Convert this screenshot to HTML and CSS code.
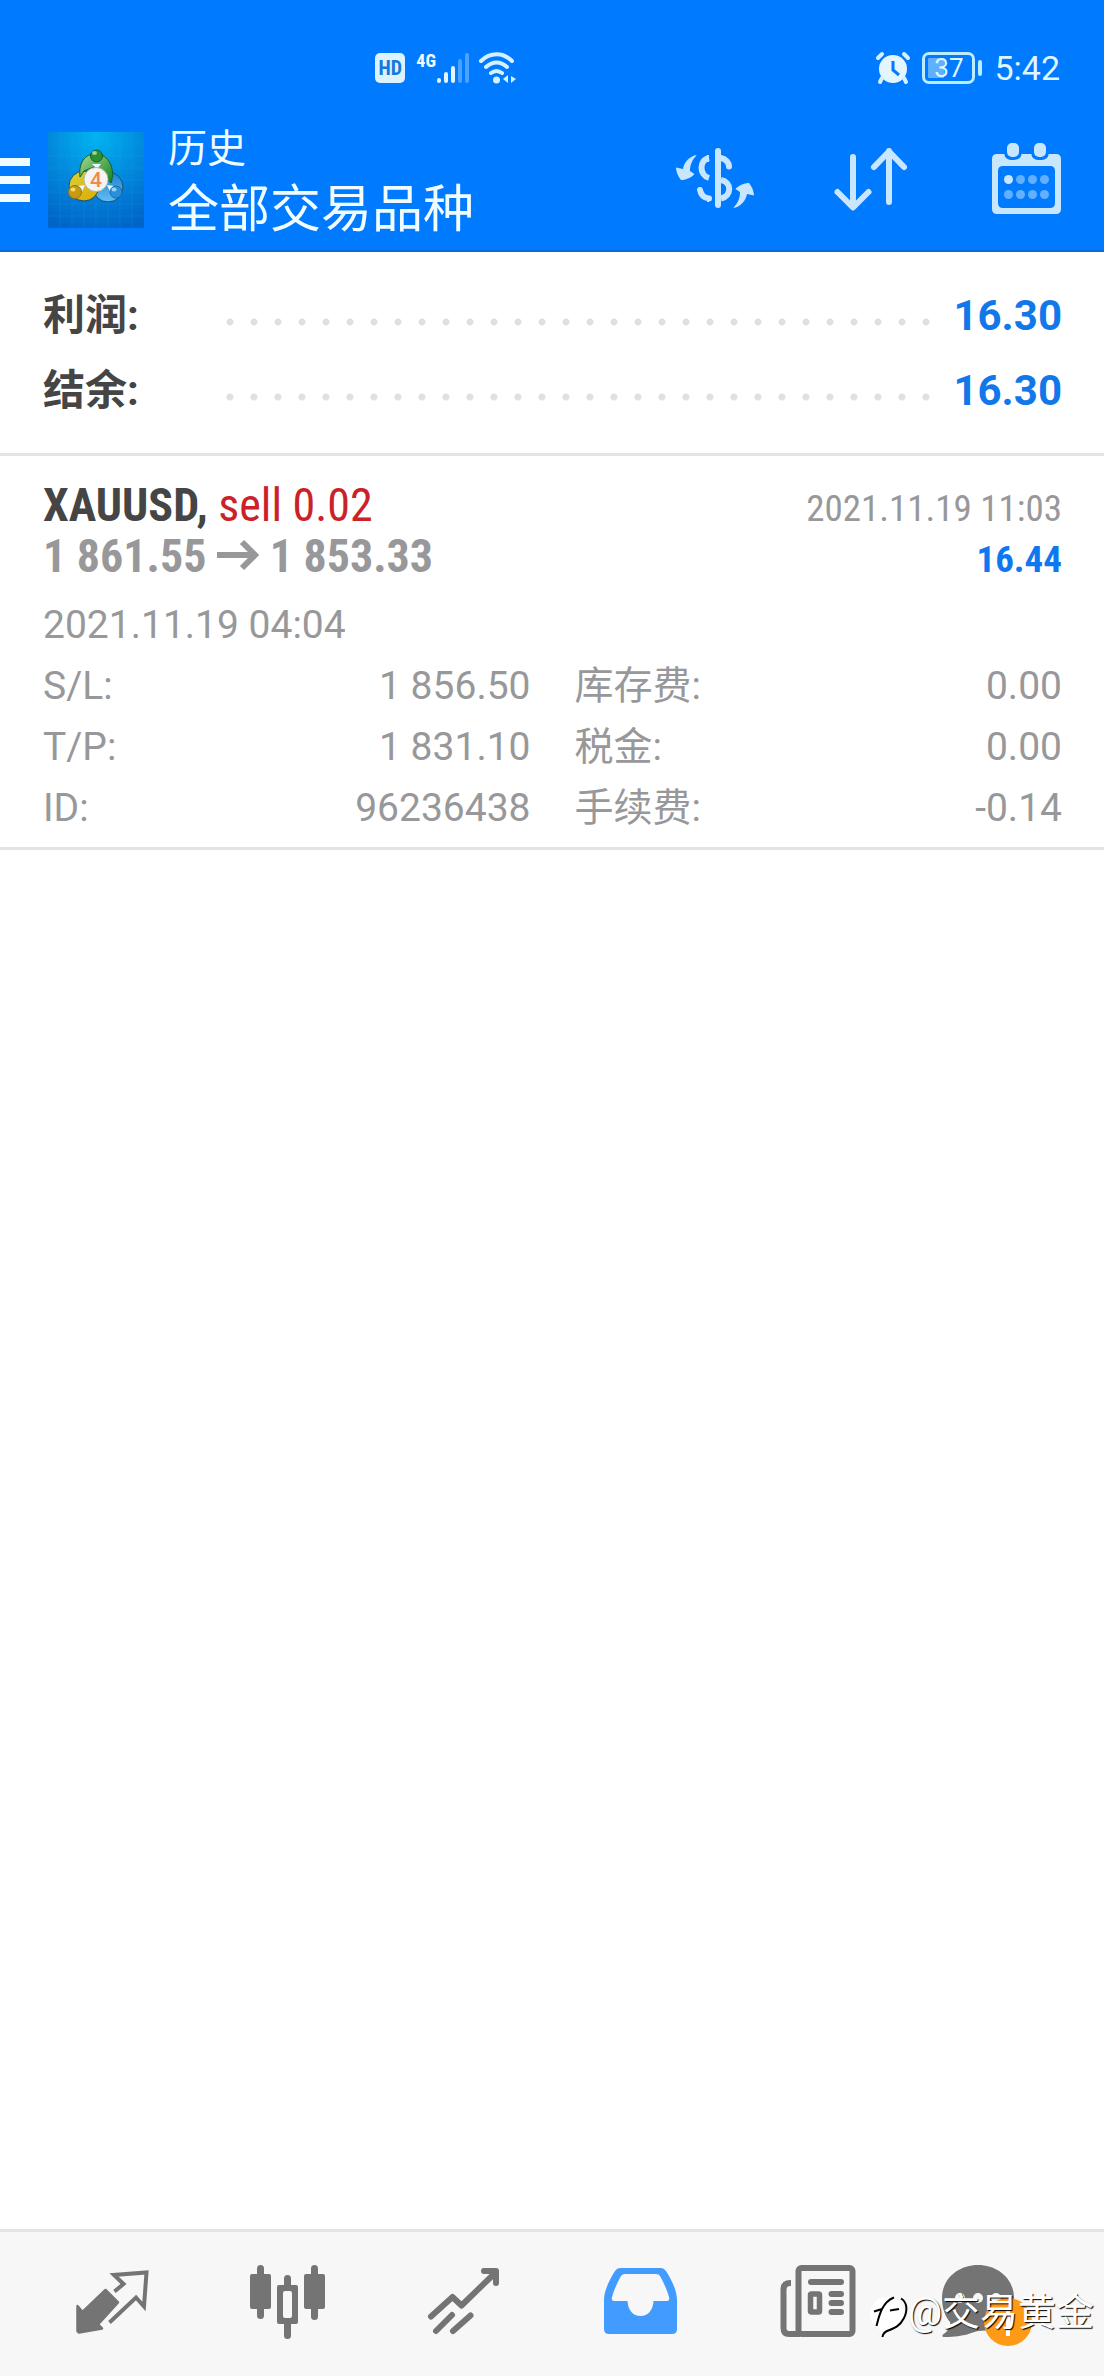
FILE: index.html
```html
<!DOCTYPE html>
<html lang="zh-CN">
<head>
<meta charset="utf-8">
<meta name="viewport" content="width=device-width, initial-scale=1">
<title>历史</title>
<link rel="stylesheet" href="styles.css">
</head>
<body>
<header class="header">
  <div class="status">
    <div class="status-group status-network">
      <span class="hd">HD</span>
      <span class="net">4G</span>
      <svg class="signal" width="34" height="32" viewBox="0 0 34 32" aria-hidden="true">
        <g stroke-width="4" stroke-linecap="round">
          <path d="M3 28v1M10 22v7M17 16v13" stroke="#e3f5ff"/>
          <path d="M24 9v20M31 3v26" stroke="#4ba3ff"/>
        </g>
      </svg>
      <svg class="wifi" width="40" height="32" viewBox="0 0 40 32" aria-hidden="true">
        <g fill="none" stroke="#d5f1ff" stroke-width="4" stroke-linecap="round">
          <path d="M3 9C12 0 25 0 34 9M8 15C15 9 22 9 29 15M13 21C17 18 20 18 24 21"/>
        </g>
        <circle cx="18.500" cy="28" r="3.500" fill="#d5f1ff"/>
        <path d="M30 23v8l-5-4zM32 23v8M33 31v-7l5 3z" fill="#d5f1ff"/>
      </svg>
    </div>
    <div class="status-group">
      <svg width="34" height="32" viewBox="0 0 34 32" aria-hidden="true">
        <circle cx="17" cy="17" r="14" fill="#e3f5ff"/>
        <path d="M2 6l4-4M32 6l-4-4M6 26l-2 4M28 26l2 4" stroke="#d5f1ff" stroke-width="4" stroke-linecap="round"/>
        <path d="M17 9v9l6 5" fill="none" stroke="#007aff" stroke-width="3"/>
      </svg>
      <span class="battery"><span class="battery-body">37</span><span class="battery-tip"></span></span>
      <time class="clock">5:42</time>
    </div>
  </div>
  <div class="appbar">
    <button class="menu" type="button" aria-label="菜单"><span></span><span></span><span></span></button>
    <svg class="logo" width="96" height="96" viewBox="0 0 96 96" aria-hidden="true">
      <defs>
        <radialGradient id="bg" cx=".5" cy=".05" r="1"><stop offset="0" stop-color="#00b4f0"/><stop offset=".5" stop-color="#0288dc"/><stop offset="1" stop-color="#0064c8"/></radialGradient>
        <linearGradient id="gr" x2="1" y2="1"><stop offset="0" stop-color="#a4dc92"/><stop offset="1" stop-color="#16801e"/></linearGradient>
        <linearGradient id="ye" x2="1" y2="1"><stop offset="0" stop-color="#d8d23a"/><stop offset="1" stop-color="#dba900"/></linearGradient>
        <linearGradient id="bl" x2="0" y2="1"><stop offset="0" stop-color="#1583d0"/><stop offset="1" stop-color="#66bdf2"/></linearGradient>
      </defs>
      <path d="M0 0h96v96H0z" fill="url(#bg)"/>
      <path d="M12 0v96M24 0v96M36 0v96M48 0v96M60 0v96M72 0v96M84 0v96M0 12h96M0 24h96M0 36h96M0 48h96M0 60h96M0 72h96M0 84h96" stroke="#5bd0ff" stroke-opacity=".1"/>
      <g stroke="#16507a" stroke-width="1">
        <circle cx="60" cy="55" r="15" fill="url(#bl)"/>
        <circle cx="36" cy="54" r="15" fill="url(#ye)"/>
        <path d="M32 45C30 28 40 21 48 22C60 22 68 36 63 51L58 45L48 34L36 39z" fill="url(#gr)" stroke="#14602a"/>
      </g>
      <path d="M44 32h9l-4 5zM30 54l7-1-4 9zM66 54l-7-1 4 9z" fill="#eef8ff"/>
      <circle cx="48.500" cy="24" r="6" fill="#2f8f35" stroke="#17602a"/>
      <circle cx="27" cy="60" r="6.500" fill="#c99a10" stroke="#8c7420"/>
      <circle cx="68" cy="60" r="6" fill="#2a90da" stroke="#1768a8"/>
      <ellipse cx="46.500" cy="21" rx="2.500" ry="2" fill="#9bd58f"/>
      <ellipse cx="25" cy="57.500" rx="2.500" ry="2" fill="#f3dc6c"/>
      <ellipse cx="66" cy="57.500" rx="2.500" ry="2" fill="#95d3fa"/>
      <circle cx="48" cy="47.500" r="12" fill="#f6f4f2" stroke="#b9b5a5"/>
      <text class="logo-number" x="48" y="55" text-anchor="middle">4</text>
    </svg>
    <div class="titles">
      <h1 class="screen-name">历史</h1>
      <p class="symbol-name">全部交易品种</p>
    </div>
    <div class="actions">
      <button class="icon-button" type="button" aria-label="货币">
        <svg width="84" height="84" viewBox="0 0 84 84">
          <g fill="none" stroke="#c9e6ff" stroke-width="6">
            <path d="M45 13v54" stroke-linecap="round"/>
            <path d="M36 20C26 22 26 37 36 40M48 42C59 44 59 58 48 60.500"/>
            <path d="M48 20C53 21 56 25 56 28.500M27 52C28 57 31 60 36 60.500" stroke-linecap="round"/>
            <path d="M34 17h2v7h-2zM34 58h2v6h-2z" fill="#c9e6ff" stroke="none"/>
          </g>
          <path id="turn" d="M23.700 17C17 18 11 24 10 31L3 29.500C3 34 6 40 8 42C12 42 18 40 21.500 36L17 33C17 27 19 22 23.700 17z" fill="#c9e6ff"/>
          <use href="#turn" transform="rotate(180 42 43.500)"/>
        </svg>
      </button>
      <button class="icon-button" type="button" aria-label="排序">
        <svg width="84" height="84" viewBox="0 0 84 84" fill="none" stroke="#c9e6ff" stroke-width="6" stroke-linecap="round" stroke-linejoin="round">
          <path d="M24 19v50M8.500 54L24 69.500L39.500 54M60 64V13M45 29L60 13.500L75 29"/>
        </svg>
      </button>
      <button class="icon-button" type="button" aria-label="日期">
        <svg width="84" height="84" viewBox="0 0 84 84" fill="#c9e6ff">
          <path fill-rule="evenodd" d="M12 16H19.500C19.500 20 23 22 28 22C33 22 36.500 20 36.500 16H46.500C46.500 20 50 22 55 22C60 22 63.500 20 63.500 16H71Q76 16 76 21V71Q76 76 71 76H12Q7 76 7 71V21Q7 16 12 16zM18 28Q13 28 13 33V65Q13 70 18 70H65Q70 70 70 65V33Q70 28 65 28z"/>
          <rect x="22" y="5" width="12" height="14" rx="5"/><rect x="49" y="5" width="12" height="14" rx="5"/>
          <circle cx="23.500" cy="41.500" r="4.500"/>
          <g fill="#62b0ff"><circle cx="35.500" cy="41.500" r="4.500"/><circle cx="47.500" cy="41.500" r="4.500"/><circle cx="59.500" cy="41.500" r="4.500"/><circle cx="23.500" cy="56.500" r="4.500"/><circle cx="35.500" cy="56.500" r="4.500"/><circle cx="47.500" cy="56.500" r="4.500"/><circle cx="59.500" cy="56.500" r="4.500"/></g>
        </svg>
      </button>
    </div>
  </div>
</header>

<main class="content">
  <dl class="summary">
    <div class="summary-row"><dt>利润:</dt><dd>16.30</dd></div>
    <div class="summary-row"><dt>结余:</dt><dd>16.30</dd></div>
  </dl>
  <article class="trade">
    <div class="trade-line">
      <h2 class="trade-symbol">XAUUSD, <span class="sell">sell 0.02</span></h2>
      <time class="trade-close">2021.11.19 11:03</time>
    </div>
    <div class="trade-line">
      <p class="trade-prices">1 861.55 <svg class="arrow" width="42" height="34" viewBox="0 0 42 34" role="img" aria-label="至"><path d="M0 17h38M25 4l13 13l-13 13" fill="none" stroke="#98989a" stroke-width="6"/></svg> 1 853.33</p>
      <strong class="trade-profit">16.44</strong>
    </div>
    <div class="details">
      <time class="trade-open">2021.11.19 04:04</time>
      <dl class="fields">
        <div class="field"><dt>S/L:</dt><dd>1 856.50</dd></div>
        <div class="field"><dt>库存费:</dt><dd>0.00</dd></div>
        <div class="field"><dt>T/P:</dt><dd>1 831.10</dd></div>
        <div class="field"><dt>税金:</dt><dd>0.00</dd></div>
        <div class="field"><dt>ID:</dt><dd>96236438</dd></div>
        <div class="field"><dt>手续费:</dt><dd>-0.14</dd></div>
      </dl>
    </div>
  </article>
</main>

<nav class="tabs">
  <a class="tab" href="#quotes" aria-label="行情">
    <svg width="84" height="84" viewBox="0 0 84 84">
      <path d="M35.500 28L48 40.500L28 62.500L32 66.500L9 70.500L7.500 69V44L12.500 50z" fill="#747474" stroke="#747474" stroke-width="2.500" stroke-linejoin="round"/>
      <path d="M44.500 29.500L53.500 22L44 13L76.500 10.500L74 44.500L66 35.500L39.500 60.500" fill="none" stroke="#747474" stroke-width="4"/>
    </svg>
  </a>
  <a class="tab" href="#chart" aria-label="图表">
    <svg width="84" height="84" viewBox="0 0 84 84" fill="#747474">
      <rect x="4" y="12" width="21" height="35" rx="2"/><rect x="11" y="3" width="7" height="54" rx="3.500"/>
      <path fill-rule="evenodd" d="M33 23H50Q52 23 52 25V60Q52 62 50 62H33Q31 62 31 60V25Q31 23 33 23zM39 29Q37 29 37 31V54Q37 56 39 56H44Q46 56 46 54V31Q46 29 44 29z"/>
      <path d="M38 24V16.500a3.500 3.500 0 0 1 7 0V24zM38 61V73.500a3.500 3.500 0 0 0 7 0V61z"/>
      <rect x="58" y="12" width="21" height="35" rx="2"/><rect x="65" y="3" width="7" height="55" rx="3.500"/>
    </svg>
  </a>
  <a class="tab" href="#trade" aria-label="交易">
    <svg width="84" height="84" viewBox="0 0 84 84" fill="none" stroke="#747474" stroke-width="6" stroke-linecap="round" stroke-linejoin="round">
      <path d="M9 54.500L30.500 35L39.500 43.500L73 11M62 9H74V21"/>
      <path d="M14 69L30 53M31 69L48.500 53.500"/>
    </svg>
  </a>
  <a class="tab" href="#history" aria-label="历史" aria-current="page">
    <svg width="84" height="84" viewBox="0 0 84 84">
      <path fill="#429cff" fill-rule="evenodd" d="M22 6H63Q66 6 68 9C73 17 79 28 79 38V67Q79 72 74 72H11Q6 72 6 67V38C6 28 12 17 17 9Q19 6 22 6zM27 12Q24 12 23 14C19 21 16 28 14 35Q13 39 16 39H29.500C30 48 35 54 42.500 54C50 54 55 48 55.500 39H69Q72 39 71 35C69 28 66 21 62 14Q61 12 58 12z"/>
    </svg>
  </a>
  <a class="tab" href="#news" aria-label="新闻">
    <svg width="84" height="84" viewBox="0 0 84 84" fill="none" stroke="#747474" stroke-width="6">
      <rect x="24.500" y="6" width="54" height="66" rx="3"/>
      <path d="M17 21H16Q9.500 21 9.500 28V66Q9.500 72 15 72H26"/>
      <path d="M37 20H67M57.500 32H67M57.500 41H67M57.500 50H67" stroke-linecap="round"/>
      <rect x="36.500" y="32" width="9" height="18" rx="1" stroke-width="5.500"/>
    </svg>
  </a>
  <a class="tab" href="#messages" aria-label="消息">
    <svg class="messages" width="84" height="84" viewBox="0 0 84 84">
      <path d="M28 3C48 3 64 17 64 36C64 56 50 69 28 69C23 70 15 75-5 75C-9 75-8 73-5 71C-1 68 1 64 0 60C-5 54-8 46-8 36C-8 17 8 3 28 3z" fill="#747474"/>
      <g fill="#f7f7f7"><circle cx="10" cy="36" r="5"/><circle cx="28" cy="36" r="5"/><circle cx="46" cy="36" r="5"/></g>
      <circle cx="58" cy="60" r="24" fill="#ff9a17"/>
      <path d="M58 46v28" stroke="#fff" stroke-width="4"/>
    </svg>
  </a>
  <div class="watermark">
    <svg width="38" height="44" viewBox="0 0 38 44" aria-hidden="true">
      <circle cx="17" cy="24" r="17" fill="#fff"/>
      <path d="M4 21.500L12 19M6.500 36C9 26 12 12 24 7.500M20 20.500L29 19M31 8.500C37 12 38 20 34 28C30 36 25 38 17 41Q13 43 12.500 47" fill="none" stroke="#000" stroke-width="2"/>
    </svg>
    <span>@交易黄金</span>
  </div>
</nav>
</body>
</html>
```

FILE: styles.css
```css
* {
  box-sizing: border-box;
}

body {
  display: flex;
  flex-direction: column;
  min-height: 100vh;
  margin: 0;
  background: #fff;
  color: #98989a;
  font-family: Roboto, "Noto Sans CJK SC", sans-serif;
  font-size: 39px;
}

h1, h2, p, dl, dd {
  margin: 0;
  font-weight: 400;
}

svg {
  display: block;
  overflow: visible;
}

button {
  padding: 0;
  border: 0;
  background: none;
}

.header {
  background: #007aff;
  border-bottom: 2px solid #0b6bd6;
  color: #f0fcff;
}

/* Status bar */

.status {
  display: flex;
  justify-content: space-between;
  align-items: center;
  height: 112px;
  padding: 24px 44px 0 34%;
}

.status-group {
  display: flex;
  align-items: center;
  gap: 12px;
}

.status-network {
  gap: 0;
}

.hd {
  width: 30px;
  border-radius: 5px;
  background: #dcf2ff;
  color: #1479dc;
  font-family: "Roboto Condensed", Roboto, sans-serif;
  font-size: 20px;
  font-weight: 700;
  line-height: 30px;
  text-align: center;
}

.net {
  align-self: flex-start;
  margin-left: 11px;
  font-family: "Roboto Condensed", Roboto, sans-serif;
  font-size: 18px;
  font-weight: 700;
  line-height: 18px;
}

.wifi {
  margin-left: 8px;
}

.battery {
  display: flex;
  align-items: center;
  gap: 3px;
}

.battery-body {
  width: 53px;
  padding: 3px;
  border: 3px solid #b9edff;
  border-radius: 7px;
  background: linear-gradient(90deg, #5fb0ff 40%, transparent 40%) content-box;
  color: #dff6ff;
  font-size: 26px;
  line-height: 20px;
  text-align: center;
}

.battery-tip {
  width: 4px;
  height: 16px;
  border-radius: 2px;
  background: #b9edff;
}

.clock {
  color: #dff6ff;
  font-size: 34px;
  line-height: 32px;
}

/* App bar */

.appbar {
  display: flex;
  align-items: center;
  height: 138px;
  padding: 0 35px 2px 0;
}

.menu {
  display: grid;
  gap: 10px;
  width: 30px;
}

.menu span {
  height: 8px;
  background: #f0fcff;
}

.logo {
  margin-left: 18px;
}

.logo-number {
  fill: #f08a4b;
  font-size: 21px;
  font-weight: 500;
}

.titles {
  flex: 1;
  margin-left: 24px;
  padding-top: 4px;
}

.screen-name {
  font-size: 39px;
  line-height: 56px;
}

.symbol-name {
  font-size: 51px;
  line-height: 66px;
}

.actions {
  display: flex;
  gap: 72px;
}

/* Summary */

.content {
  flex: 1;
}

.summary {
  padding: 26px 42px 25px 43px;
  border-bottom: 3px solid #e4e4e4;
}

.summary-row {
  display: flex;
  align-items: center;
  font-size: 42px;
  font-weight: 700;
  line-height: 75px;
}

.summary-row dt {
  width: 175px;
  height: 75px;
  color: #454545;
}

.summary-row dd {
  display: flex;
  flex: 1;
  align-items: center;
  color: #1278ea;
  font-weight: 700;
}

/* Dotted leader between the label and its amount */
.summary-row dd::before {
  content: "";
  flex: 1;
  height: 8px;
  margin: 12px 16px 0 0;
  background: radial-gradient(circle at 12px 4px, #e0e0e0 3px, transparent 4px) 0 0 / 24px 8px repeat-x;
}

/* Trade */

.trade {
  padding: 24px 42px 8px 43px;
  border-bottom: 3px solid #e4e4e4;
}

.trade-line {
  display: flex;
  justify-content: space-between;
  align-items: baseline;
  height: 51px;
  font-family: "Roboto Condensed", Roboto, sans-serif;
  font-size: 37px;
  line-height: 51px;
}

.trade-symbol,
.trade-prices {
  font-size: 46px;
  font-weight: 700;
}

.trade-symbol {
  color: #454545;
}

.sell {
  color: #cb2229;
  font-weight: 400;
}

.arrow {
  display: inline-block;
}

.trade-profit {
  color: #0f78ee;
}

.details {
  margin-top: 13px;
  line-height: 61px;
}

.trade-open {
  display: block;
}

.fields {
  display: grid;
  grid-template-columns: 1fr 1fr;
  column-gap: 44px;
}

.field {
  display: flex;
  justify-content: space-between;
  height: 61px;
}

/* Bottom tabs */

.tabs {
  position: relative;
  display: flex;
  padding: 30px 24px;
  border-top: 3px solid #e4e4e4;
  background: #f7f7f7;
}

.tab {
  display: flex;
  flex: 1;
  justify-content: center;
}

.watermark {
  position: absolute;
  right: 10px;
  bottom: 39px;
  display: flex;
  align-items: center;
  color: #fff;
  font-size: 38px;
  line-height: 50px;
  text-shadow: 1px 1px 1px #000;
}
```
